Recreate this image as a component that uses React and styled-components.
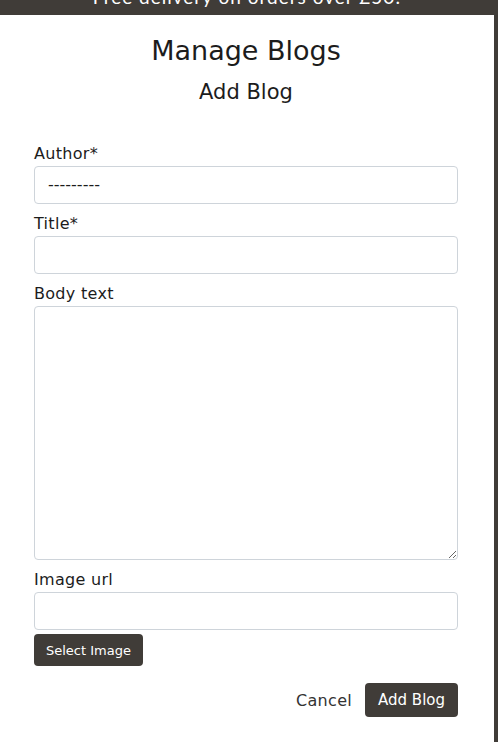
import styled, { createGlobalStyle } from 'styled-components'

const GlobalStyle = createGlobalStyle`
  body {
    margin: 0;
    background: #403c38;
    font-family: 'DejaVu Sans', 'Noto Sans', sans-serif;
    color: #1c1c1c;
  }
  * { box-sizing: border-box; }
`

const Banner = styled.div`
  height: 15px;
  overflow: hidden;
  width: 494px;
  text-align: center;
  color: #fff;
`
const BannerText = styled.p`
  margin: -14px 0 0;
  font-family: 'Lato', sans-serif;
  font-size: 19px;
  line-height: 22px;
  letter-spacing: 1px;
`
const Modal = styled.div`
  width: 494px;
  min-height: 727px;
  background: #fff;
  padding: 19px 36px 20px 34px;
`
const Title = styled.h1`
  margin: 0;
  text-align: center;
  font-size: 27px;
  font-weight: 400;
  line-height: 34px;
`
const SubTitle = styled.h2`
  margin: 10px 0 0;
  text-align: center;
  font-size: 21px;
  font-weight: 400;
  line-height: 28px;
`
const Form = styled.form`
  margin-top: 36px;
`
const Group = styled.div`
  margin-bottom: ${p => (p.$tight ? '4px' : '8px')};
`
const Label = styled.label`
  display: block;
  font-size: 16px;
  line-height: 24px;
  letter-spacing: 0.3px;
`
const Input = styled.input`
  display: block;
  width: 100%;
  height: 38px;
  border: 1px solid #ced4da;
  border-radius: 4px;
  padding: 6px 12px;
  font: inherit;
  font-size: 16px;
`
const SelectBox = styled.div`
  height: 38px;
  border: 1px solid #ced4da;
  border-radius: 4px;
  padding: 0 13px;
  font-size: 16px;
  line-height: 36px;
`
const TextArea = styled.textarea`
  display: block;
  width: 100%;
  height: 254px;
  border: 1px solid #ced4da;
  border-radius: 4px;
  padding: 6px 12px;
  font: inherit;
  resize: vertical;
`
const Button = styled.button`
  background: #403c38;
  color: #fff;
  border: none;
  border-radius: 4px;
  font-family: inherit;
  font-size: ${p => (p.$small ? '13px' : '15px')};
  height: ${p => (p.$small ? '32px' : '34px')};
  padding: 0 ${p => (p.$small ? '12px' : '13px')};
`
const Footer = styled.div`
  display: flex;
  justify-content: flex-end;
  align-items: center;
  gap: 13px;
  margin-top: 17px;
`
const CancelLink = styled.span`
  font-size: 16px;
  letter-spacing: 0.3px;
  color: #333;
`

export default function App() {
  return (
    <>
      <GlobalStyle />
      <Banner>
        <BannerText>Free delivery on orders over £50!</BannerText>
      </Banner>
      <Modal>
        <Title>Manage Blogs</Title>
        <SubTitle>Add Blog</SubTitle>
        <Form>
          <Group>
            <Label>Author*</Label>
            <SelectBox>---------</SelectBox>
          </Group>
          <Group>
            <Label>Title*</Label>
            <Input />
          </Group>
          <Group>
            <Label>Body text</Label>
            <TextArea />
          </Group>
          <Group $tight>
            <Label>Image url</Label>
            <Input />
          </Group>
          <Button type="button" $small>Select Image</Button>
          <Footer>
            <CancelLink>Cancel</CancelLink>
            <Button type="button">Add Blog</Button>
          </Footer>
        </Form>
      </Modal>
    </>
  )
}
